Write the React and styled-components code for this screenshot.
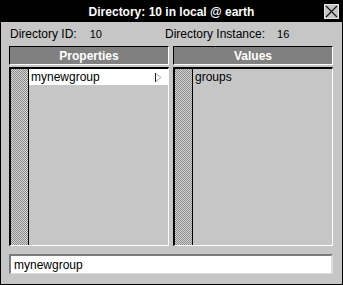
import React from 'react'
import styled, { createGlobalStyle } from 'styled-components'

const Global = createGlobalStyle`
    html, body {
        margin: 0;
        padding: 0;
        background: #c6c6c6;
    }
    * {
        box-sizing: border-box;
    }
`

const Window = styled.div`
    width: 343px;
    height: 285px;
    border: 1px solid #000;
    background: #c6c6c6;
    font-family: "Liberation Sans", Arial, sans-serif;
    color: #000;
    display: flex;
    flex-direction: column;
`

const TitleBar = styled.div`
    height: 21px;
    background: #000;
    color: #fff;
    display: grid;
    grid-template-columns: 1fr auto 1fr;
    align-items: center;
    font-size: 12px;
    font-weight: bold;
`

const TitleText = styled.div`
    grid-column: 2;
    white-space: nowrap;
`

const CloseButton = styled.div`
    grid-column: 3;
    justify-self: end;
    margin-right: 3px;
    width: 15px;
    height: 15px;
    background: #c6c6c6;
    border: 1px solid #e6e6e6;
    display: flex;
    align-items: center;
    justify-content: center;
`

const Body = styled.div`
    flex: 1;
    padding: 0 9px 0 8px;
    display: flex;
    flex-direction: column;
`

const InfoRow = styled.div`
    height: 24px;
    padding-left: 1px;
    display: grid;
    grid-template-columns: 155px 1fr;
    align-items: center;
    font-size: 12px;
`

const Info = styled.div`
    display: flex;
    align-items: baseline;
    white-space: nowrap;
`

const InfoValue = styled.span`
    font-size: 11px;
    margin-left: ${p => p.gap}px;
`

const Columns = styled.div`
    display: grid;
    grid-template-columns: 160px 160px;
    column-gap: 4px;
`

const HeaderBar = styled.div`
    height: 19px;
    background: #808080;
    border-style: solid;
    border-width: 1px;
    border-color: #000 #fff #fff #000;
    color: #fff;
    font-size: 12px;
    font-weight: bold;
    display: flex;
    align-items: center;
    justify-content: center;
`

const ListBox = styled.div`
    margin-top: 2px;
    height: 179px;
    border-style: solid;
    border-width: 2px 1px 1px 2px;
    border-color: #000 #fff #fff #000;
    display: flex;
`

const Stipple = styled.div`
    width: ${p => p.w}px;
    flex-shrink: 0;
    border-right: 1px solid #000;
    overflow: hidden;
    svg {
        display: block;
    }
`

const ListContent = styled.div`
    flex: 1;
    display: flex;
    flex-direction: column;
`

const Item = styled.div`
    height: 16px;
    padding-left: 2px;
    padding-right: 6px;
    background: ${p => (p.selected ? '#fff' : 'transparent')};
    font-size: 12px;
    display: flex;
    align-items: center;
    justify-content: space-between;
`

const Field = styled.div`
    margin-top: 8px;
    height: 20px;
    border-style: solid;
    border-width: 2px 2px 1px 2px;
    border-color: #7b7b7b #dcdcdc #dcdcdc #7b7b7b;
    background: #fff;
    padding-left: 3px;
    font-size: 12px;
    display: flex;
    align-items: center;
`

const Checker = ({ id }) => (
    <svg width="100%" height="100%" shapeRendering="crispEdges">
        <defs>
            <pattern id={id} width="2" height="2" patternUnits="userSpaceOnUse">
                <rect width="2" height="2" fill="#d6d6d6" />
                <rect width="1" height="1" fill="#8a8a8a" />
                <rect x="1" y="1" width="1" height="1" fill="#8a8a8a" />
            </pattern>
        </defs>
        <rect width="100%" height="100%" fill={`url(#${id})`} />
    </svg>
)

const Arrow = () => (
    <svg width="7" height="9" viewBox="0 0 7 9">
        <path d="M0.5 0.5 L6 4.5 L0.5 8.5" fill="none" stroke="#a8a8a8" strokeWidth="1" />
        <path d="M0.5 0 L0.5 9" stroke="#222" strokeWidth="1" />
    </svg>
)

const CloseIcon = () => (
    <svg width="13" height="13" viewBox="0 0 13 13">
        <path d="M1 1 L12 12 M12 1 L1 12" stroke="#1a1a1a" strokeWidth="1.3" />
    </svg>
)

const App = () => {
    return (
        <>
            <Global />
            <Window>
                <TitleBar>
                    <TitleText>Directory: 10 in local @ earth</TitleText>
                    <CloseButton>
                        <CloseIcon />
                    </CloseButton>
                </TitleBar>
                <Body>
                    <InfoRow>
                        <Info>
                            Directory ID:<InfoValue gap={13}>10</InfoValue>
                        </Info>
                        <Info>
                            Directory Instance:<InfoValue gap={12}>16</InfoValue>
                        </Info>
                    </InfoRow>
                    <Columns>
                        <HeaderBar>Properties</HeaderBar>
                        <HeaderBar>Values</HeaderBar>
                    </Columns>
                    <Columns>
                        <ListBox>
                            <Stipple w={18}>
                                <Checker id="chk-props" />
                            </Stipple>
                            <ListContent>
                                <Item selected>
                                    mynewgroup
                                    <Arrow />
                                </Item>
                            </ListContent>
                        </ListBox>
                        <ListBox>
                            <Stipple w={18}>
                                <Checker id="chk-values" />
                            </Stipple>
                            <ListContent>
                                <Item>groups</Item>
                            </ListContent>
                        </ListBox>
                    </Columns>
                    <Field>mynewgroup</Field>
                </Body>
            </Window>
        </>
    )
}

export default App
